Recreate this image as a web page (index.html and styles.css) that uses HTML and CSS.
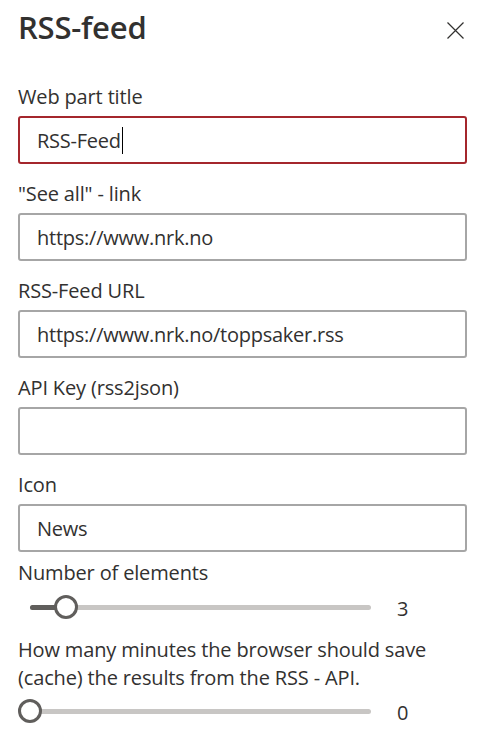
FILE: index.html
```html
<!DOCTYPE html>
<html lang="en">
<head>
<meta charset="utf-8">
<title>RSS-feed</title>
<link rel="stylesheet" href="styles.css">
</head>
<body>
<div class="panel">
  <div class="header">
    <h1 class="title">RSS-feed</h1>
    <button class="close" aria-label="Close">
      <svg width="17" height="17" viewBox="0 0 17 17"><path d="M0.5 0.5 L16.5 16.5 M16.5 0.5 L0.5 16.5" stroke="#323130" stroke-width="1.2" fill="none"/></svg>
    </button>
  </div>

  <div class="fields">
    <div class="field">
      <div class="label">Web part title</div>
      <div class="input focused"><span>RSS-Feed</span><span class="caret"></span></div>
    </div>
    <div class="field">
      <div class="label">"See all" - link</div>
      <div class="input"><span>https://www.nrk.no</span></div>
    </div>
    <div class="field">
      <div class="label">RSS-Feed URL</div>
      <div class="input"><span>https://www.nrk.no/toppsaker.rss</span></div>
    </div>
    <div class="field">
      <div class="label">API Key (rss2json)</div>
      <div class="input"></div>
    </div>
    <div class="field">
      <div class="label">Icon</div>
      <div class="input"><span>News</span></div>
    </div>
  </div>

  <div class="slider-field first">
    <div class="label">Number of elements</div>
    <div class="slider-row">
      <div class="slider">
        <div class="track">
          <div class="fill" style="width:10.53%"></div>
          <div class="thumb" style="left:10.53%"></div>
        </div>
      </div>
      <div class="value">3</div>
    </div>
  </div>

  <div class="slider-field second">
    <div class="label">How many minutes the browser should save (cache) the results from the RSS - API.</div>
    <div class="slider-row">
      <div class="slider">
        <div class="track">
          <div class="fill" style="width:0%"></div>
          <div class="thumb" style="left:0%"></div>
        </div>
      </div>
      <div class="value">0</div>
    </div>
  </div>
</div>
</body>
</html>
```

FILE: styles.css
```css
* { box-sizing: border-box; }

html, body {
  margin: 0;
  padding: 0;
  background: #ffffff;
}

body {
  font-family: "Open Sans", "Noto Sans", "Liberation Sans", sans-serif;
  color: #323130;
}

.panel {
  width: 484px;
  padding: 0 17px 0 18px;
}

.header {
  display: flex;
  justify-content: space-between;
  align-items: flex-start;
  height: 83px;
}

.title {
  margin: 7px 0 0 0;
  font-size: 31px;
  line-height: 40px;
  font-weight: 600;
  letter-spacing: -0.2px;
  color: #323130;
}

.close {
  margin: 22px 3px 0 0;
  padding: 0;
  border: 0;
  background: none;
  width: 17px;
  height: 17px;
  display: flex;
}

.fields {
  display: flex;
  flex-direction: column;
  gap: 16px;
}

.field {
  display: flex;
  flex-direction: column;
}

.label {
  font-size: 20px;
  line-height: 28px;
  letter-spacing: -0.15px;
  color: #323130;
}

.field .label {
  margin-bottom: 5px;
}

.input {
  height: 48px;
  border: 2px solid #a6a6a6;
  border-radius: 3px;
  padding: 0 17px;
  display: flex;
  align-items: center;
  font-size: 20px;
  letter-spacing: -0.25px;
  color: #323130;
  white-space: nowrap;
}

.input.focused {
  border-color: #a4262c;
}

.caret {
  display: inline-block;
  width: 1px;
  height: 27px;
  background: #000;
  margin-left: 1px;
}

.slider-field.first {
  margin-top: 7px;
}

.slider-field.second {
  margin-top: 13px;
}

.slider-field.first .label {
  margin-bottom: 4px;
}

.slider-field.second .label {
  margin-bottom: 3px;
}

.slider-row {
  display: flex;
  align-items: center;
  height: 32px;
}

.slider {
  width: 365px;
  height: 32px;
  padding: 0 12px;
  display: flex;
  align-items: center;
}

.track {
  position: relative;
  width: 100%;
  height: 5px;
  border-radius: 3px;
  background: #c8c6c4;
}

.fill {
  height: 100%;
  border-radius: 3px 0 0 3px;
  background: #605e5c;
}

.thumb {
  position: absolute;
  top: 50%;
  width: 24px;
  height: 24px;
  margin: -12px 0 0 -12px;
  border: 3px solid #605e5c;
  border-radius: 50%;
  background: #ffffff;
}

.value {
  margin-left: 14px;
  font-size: 20px;
  line-height: 28px;
  padding-top: 3px;
  color: #323130;
}
```
